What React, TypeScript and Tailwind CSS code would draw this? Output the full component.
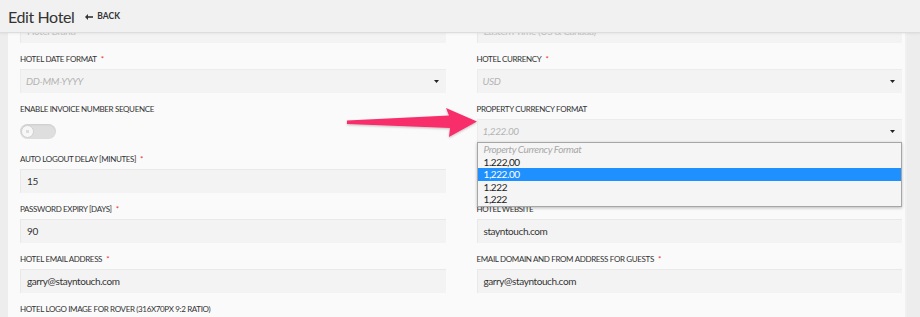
import React from "react";

const font = "font-['Lato','Liberation_Sans',sans-serif]";

function Label({ text, required }: { text: string; required?: boolean }) {
  return (
    <div className="h-[10px] leading-[10px] text-[8px] tracking-[-0.35px] text-[#333] uppercase whitespace-nowrap">
      {text}
      {required && <span className="text-[#e8322f] ml-[4px]">*</span>}
    </div>
  );
}

function TextBox({ value, faded }: { value: string; faded?: boolean }) {
  return (
    <div
      className={
        faded
          ? "h-[24px] bg-[#f3f3f3] border-l border-t border-[#e9e9e9] flex items-center pl-[6px] text-[10px] tracking-[-0.4px] text-[#c4c4c4]"
          : "h-[24px] bg-[#f3f3f3] border-l border-t border-[#e9e9e9] flex items-center pl-[6px] text-[10px] tracking-[-0.4px] text-[#333]"
      }
    >
      {value}
    </div>
  );
}

function Caret() {
  return (
    <svg width="5" height="3" viewBox="0 0 5 3" className="mr-[7px]">
      <path d="M0 0h5L2.5 3z" fill="#222" />
    </svg>
  );
}

function SelectBox({ value }: { value: string }) {
  return (
    <div className="h-[24px] bg-[#f3f3f3] border-l border-t border-[#ececec] flex items-center justify-between pl-[5px] text-[10px] tracking-[-0.4px] italic text-[#b3b3b3]">
      <span>{value}</span>
      <Caret />
    </div>
  );
}

function Field({ label, required, children }: { label: string; required?: boolean; children: React.ReactNode }) {
  return (
    <div className="mt-[11px] flex flex-col gap-[5px]">
      <Label text={label} required={required} />
      {children}
    </div>
  );
}

function Toggle() {
  return (
    <div className="h-[24px] flex items-center">
      <div className="w-[36px] h-[15px] rounded-full bg-[#dedede] shadow-[inset_0_1px_2px_rgba(0,0,0,0.08)] flex items-center pl-[1px]">
        <div className="w-[13px] h-[13px] rounded-full bg-[#f7f7f7] border border-[#d0d0d0] flex items-center justify-center">
          <div className="w-[3px] h-[3px] bg-[#dcdcdc]" />
        </div>
      </div>
    </div>
  );
}

const formats = ["1.222,00", "1,222.00", "1.222", "1,222"];

function CurrencyDropdown() {
  return (
    <div className="relative">
      <SelectBox value="1,222.00" />
      <div className="absolute left-0 right-0 top-[23px] z-10 bg-[#f5f5f5] border border-[#a6a6a6] shadow-[0_1px_3px_rgba(0,0,0,0.25)] text-[10px] tracking-[-0.4px]">
        <div className="h-[12.5px] leading-[12.5px] pl-[6px] italic text-[#a8a8a8]">Property Currency Format</div>
        {formats.map((f, i) => (
          <div
            key={f}
            className={
              i === 1
                ? "h-[12.5px] leading-[12.5px] pl-[6px] bg-[#1e90ff] text-white"
                : "h-[12.5px] leading-[12.5px] pl-[6px] text-[#222]"
            }
          >
            {f}
          </div>
        ))}
      </div>
    </div>
  );
}

function PointerArrow() {
  return (
    <svg
      className="absolute left-[340px] top-[100px] pointer-events-none"
      width="145"
      height="45"
      viewBox="340 100 145 45"
    >
      <defs>
        <filter id="sh" x="-10%" y="-30%" width="120%" height="160%">
          <feDropShadow dx="0" dy="1" stdDeviation="1" floodColor="#000" floodOpacity="0.25" />
        </filter>
      </defs>
      <polygon
        points="347,120.5 449,115.5 446,108 477,121.5 449,137 450,128 347,124"
        fill="#f72f6a"
        filter="url(#sh)"
      />
    </svg>
  );
}

export default function App() {
  return (
    <div className={`relative w-[920px] h-[317px] overflow-hidden bg-[#ededed] flex flex-col ${font}`}>
      <div className="h-[33px] shrink-0 flex items-center pl-[8px] pt-[1px] gap-[11px] bg-[#f1f1f1] border-b border-[#dddddd] shadow-[0_1px_2px_rgba(0,0,0,0.06)] z-10">
        <span className="text-[16px] text-[#333] tracking-[-0.4px]">Edit Hotel</span>
        <span className="flex items-center gap-[4px] text-[8.5px] font-bold text-[#333]">
          <svg width="8" height="6" viewBox="0 0 8 6">
            <path d="M8 3H2" stroke="#333" strokeWidth="1.6" />
            <path d="M0 3l3-3v6z" fill="#333" />
          </svg>
          BACK
        </span>
      </div>
      <div className="flex-1 min-h-0 flex pl-[8px] pr-[13px]">
        <div className="flex-1 bg-[#fafafa] overflow-hidden pl-[12px] pr-[3px] border-r-2 border-[#f0f0f0]">
          <div className="-mt-[14px] grid grid-cols-2 gap-x-[31px]">
            <div className="flex flex-col">
              <TextBox value="Hotel Brand" faded />
              <Field label="Hotel date format" required>
                <SelectBox value="DD-MM-YYYY" />
              </Field>
              <Field label="Enable invoice number sequence">
                <Toggle />
              </Field>
              <Field label="Auto logout delay [minutes]" required>
                <TextBox value="15" />
              </Field>
              <Field label="Password expiry [days]" required>
                <TextBox value="90" />
              </Field>
              <Field label="Hotel email address" required>
                <TextBox value="garry@stayntouch.com" />
              </Field>
              <Field label="Hotel logo image for rover (316x70px 9:2 ratio)">
                <div className="h-[24px]" />
              </Field>
            </div>
            <div className="flex flex-col">
              <TextBox value="Eastern Time (US & Canada)" faded />
              <Field label="Hotel currency" required>
                <SelectBox value="USD" />
              </Field>
              <Field label="Property currency format">
                <CurrencyDropdown />
              </Field>
              {/* row hidden under the open dropdown */}
              <div className="h-[50px] shrink-0" />
              <Field label="Hotel website">
                <TextBox value="stayntouch.com" />
              </Field>
              <Field label="Email domain and from address for guests" required>
                <TextBox value="garry@stayntouch.com" />
              </Field>
            </div>
          </div>
        </div>
      </div>
      <PointerArrow />
    </div>
  );
}
